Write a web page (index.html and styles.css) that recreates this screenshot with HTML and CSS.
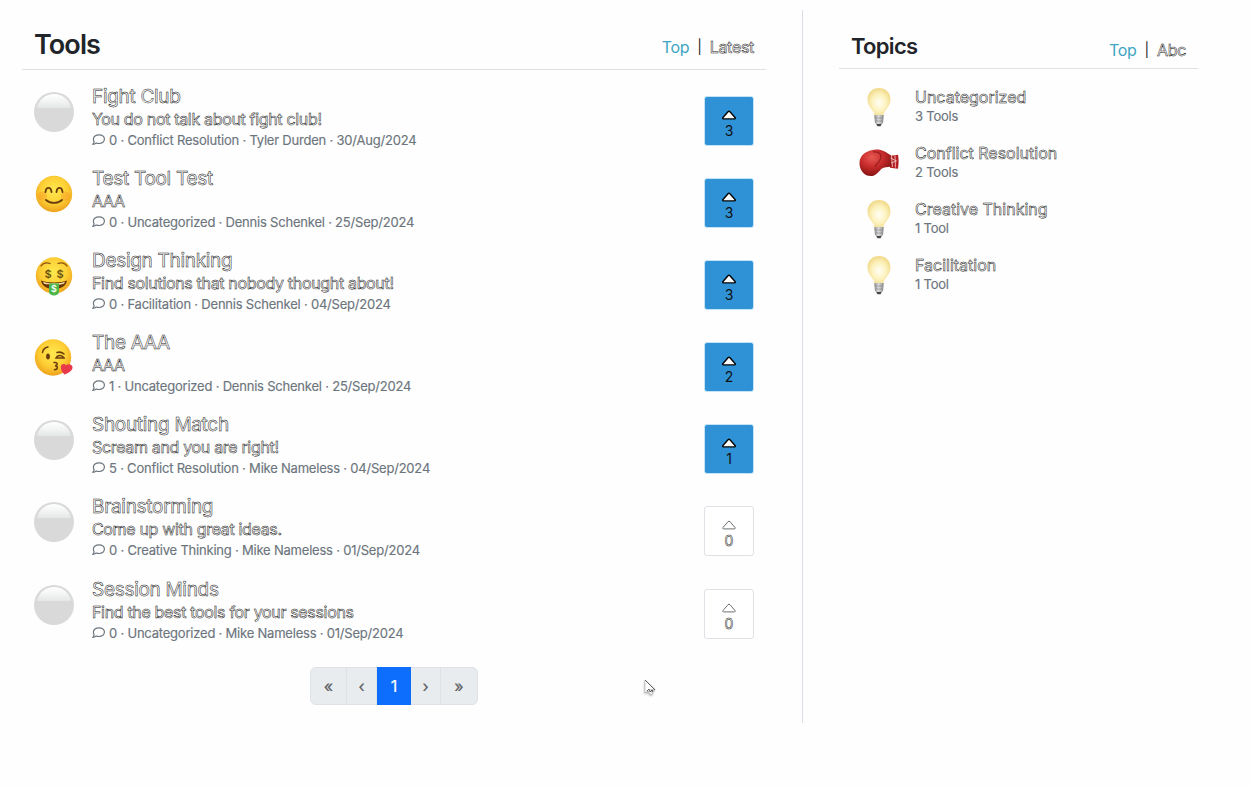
FILE: index.html
```
<!DOCTYPE html>
<html lang="en">
<head>
<meta charset="utf-8">
<title>Tools</title>
<link rel="stylesheet" href="styles.css">
</head>
<body>
<svg class="sprite" width="0" height="0" aria-hidden="true">
  <defs>
    <radialGradient id="face" cx=".5" cy=".4" r=".6"><stop offset="0" stop-color="#ffe94f"/><stop offset=".6" stop-color="#fdcf35"/><stop offset="1" stop-color="#eea21c"/></radialGradient>
    <radialGradient id="glow" cx=".5" cy=".55" r=".55"><stop offset="0" stop-color="#fffef4"/><stop offset=".55" stop-color="#fdf3c0"/><stop offset="1" stop-color="#f1d989"/></radialGradient>
    <linearGradient id="metal"><stop offset="0" stop-color="#888"/><stop offset=".45" stop-color="#ddd"/><stop offset="1" stop-color="#888"/></linearGradient>
    <radialGradient id="glove" cx=".4" cy=".3" r=".7"><stop offset="0" stop-color="#e85a54"/><stop offset=".5" stop-color="#c92c2c"/><stop offset="1" stop-color="#861313"/></radialGradient>
    <linearGradient id="gloss" x2="0" y2="1"><stop offset="0" stop-color="#fff"/><stop offset=".5" stop-color="#f3f4f4"/><stop offset="1" stop-color="#e4e7e7"/></linearGradient>
  </defs>
  <symbol id="blank" viewBox="0 0 40 40"><circle cx="20" cy="20" r="20" fill="#d9d9d9"/><path d="M3 16C5 7 12 2 20 2s15 5 17 14z" fill="url(#gloss)"/></symbol>
  <symbol id="smile" viewBox="0 0 40 40"><circle cx="20" cy="20" r="18.200" fill="url(#face)"/><circle cx="8.500" cy="22" r="4.500" fill="#f58c22" opacity=".35"/><circle cx="31.500" cy="22" r="4.500" fill="#f58c22" opacity=".35"/><path d="M11.500 18c.6-5.500 5.400-5.500 6 0M22.500 18c.6-5.500 5.400-5.500 6 0M12 26c4 3.800 12 3.800 16 0" fill="none" stroke="#6b3d0c" stroke-width="1.900" stroke-linecap="round"/></symbol>
  <symbol id="kiss" viewBox="0 0 40 40"><circle cx="19" cy="19.500" r="18.200" fill="url(#face)"/><ellipse cx="14" cy="18.500" rx="1.900" ry="3" fill="#6b3d0c"/><path d="M22 20c1.500-3.300 6-3.300 8 0zM8.500 14.500c.5-3 3-5 5.500-5.500M23 14.500c2.500-.8 5-.2 7 1.500M20 24.500c4-.5 4.200 2.700 1 3.200 3.200.2 3.200 3.500-.5 4" fill="none" stroke="#6b3d0c" stroke-width="1.500" stroke-linecap="round"/><path d="M30.500 36.500c-2.500-2.300-4-5-3.500-8 .6-3 4-3 5-1 1.500-2.200 6-1.700 6.500 1.500.4 3.500-4 6-8 7.500z" fill="#e8394a"/></symbol>
  <symbol id="bulb" viewBox="0 0 40 40"><path d="M15.500 28c-.5-5-7-8-7-15.500C8.500 5.500 13.500 1 20 1s11.500 4.500 11.500 11.500C31.500 20 25 23 24.500 28z" fill="url(#glow)"/><path d="M15.300 28h9.400l-.6 7.500-2.100 3h-4l-2.100-3z" fill="url(#metal)"/><path d="M15.500 31h9M16 34h8" stroke="#888" stroke-width=".6"/><path d="M17.500 37h5l-1 2.200h-3z" fill="#444"/></symbol>
  <symbol id="boxing" viewBox="0 0 40 40"><path d="M30 13l9-1.200c.8 4 .8 8 0 14l-8-1z" fill="#b51f22"/><path d="M.5 21C0 12 8 7 17 6.500c6-.2 10 2.500 15 6v11c-4 .8-7 .5-9 2-2.500 2-5.500 6.500-9.500 7.500C6 34 1 28 .5 21z" fill="url(#glove)"/><path d="M14 9c8-1 9 4 7 8-1.500 4-4 3-5 7" fill="none" stroke="#811515" stroke-width="1.200" opacity=".7"/><path d="M32.500 12.500l1 11.500M36 12.500l.5 12M31.500 15l6 3M32 20l5.500-2" stroke="#f0cccc" stroke-width=".8"/></symbol>
  <symbol id="comment" viewBox="0 0 13 12"><path d="M7 .8c3.200 0 5.400 1.900 5.400 4.300S10.200 9.500 7 9.500c-1 0-1.900-.2-2.700-.5-1 .8-2.200 1.300-3.600 1.300.8-.8 1.300-1.700 1.500-2.400C1.600 7.200 1.400 6.200 1.400 5.100 1.400 2.700 3.800.8 7 .8z" fill="none" stroke="#6c757d" stroke-width="1.200" stroke-linejoin="round"/></symbol>
  <symbol id="caret" viewBox="0 0 14 9"><path d="M1.300 8.400h11.400q1-.5.3-1.400L8 1.200q-1-1-2 0L1 7q-.7.900.3 1.400z"/></symbol>
</svg>
<div class="page">
  <main class="tools">
    <header class="head">
      <h1>Tools</h1>
      <nav class="sort"><a class="on">Top</a><span class="bar">|</span><a class="thin">Latest</a></nav>
    </header>
    <ul class="tool-list">
      <li class="tool"><svg class="emoji"><use href="#blank"/></svg><div class="info"><h2>Fight Club</h2><p class="thin">You do not talk about fight club!</p><small><svg class="comment"><use href="#comment"/></svg>0 · Conflict Resolution · Tyler Durden · 30/Aug/2024</small></div><button class="vote voted"><svg><use href="#caret"/></svg>3</button></li>
      <li class="tool"><svg class="emoji"><use href="#smile"/></svg><div class="info"><h2>Test Tool Test</h2><p class="thin">AAA</p><small><svg class="comment"><use href="#comment"/></svg>0 · Uncategorized · Dennis Schenkel · 25/Sep/2024</small></div><button class="vote voted"><svg><use href="#caret"/></svg>3</button></li>
      <li class="tool"><svg class="emoji" viewBox="0 0 40 40"><circle cx="20" cy="19.500" r="18.200" fill="url(#face)"/><path d="M7 10c1.500-3 6-4 9-2.500M24 7.500c3-1.500 7.500-.5 9 2.500" fill="none" stroke="#8a5110" stroke-width="1.300" stroke-linecap="round"/><path d="M7 24.500c5 2.500 21 2.500 26 0-.5 5-6 8.500-13 8.500S7.500 29.500 7 24.500z" fill="#6b3606"/><path d="M9 25.700c5 2 17 2 22 0l-1 2c-5 1.600-15 1.600-20 0z" fill="#f5dca4"/><path d="M15 27.500h10V36c0 4.500-10 4.500-10 0z" fill="#4cb748"/><g class="dollars"><text x="14" y="21.500" font-size="11">$</text><text x="26" y="21.500" font-size="11">$</text><text class="tongue" x="20" y="36" font-size="9">$</text></g></svg><div class="info"><h2>Design Thinking</h2><p class="thin">Find solutions that nobody thought about!</p><small><svg class="comment"><use href="#comment"/></svg>0 · Facilitation · Dennis Schenkel · 04/Sep/2024</small></div><button class="vote voted"><svg><use href="#caret"/></svg>3</button></li>
      <li class="tool"><svg class="emoji"><use href="#kiss"/></svg><div class="info"><h2>The AAA</h2><p class="thin">AAA</p><small><svg class="comment"><use href="#comment"/></svg>1 · Uncategorized · Dennis Schenkel · 25/Sep/2024</small></div><button class="vote voted"><svg><use href="#caret"/></svg>2</button></li>
      <li class="tool"><svg class="emoji"><use href="#blank"/></svg><div class="info"><h2>Shouting Match</h2><p class="thin">Scream and you are right!</p><small><svg class="comment"><use href="#comment"/></svg>5 · Conflict Resolution · Mike Nameless · 04/Sep/2024</small></div><button class="vote voted low"><svg><use href="#caret"/></svg>1</button></li>
      <li class="tool"><svg class="emoji"><use href="#blank"/></svg><div class="info"><h2>Brainstorming</h2><p class="thin">Come up with great ideas.</p><small><svg class="comment"><use href="#comment"/></svg>0 · Creative Thinking · Mike Nameless · 01/Sep/2024</small></div><button class="vote"><svg><use href="#caret"/></svg><span class="thin">0</span></button></li>
      <li class="tool"><svg class="emoji"><use href="#blank"/></svg><div class="info"><h2>Session Minds</h2><p class="thin">Find the best tools for your sessions</p><small><svg class="comment"><use href="#comment"/></svg>0 · Uncategorized · Mike Nameless · 01/Sep/2024</small></div><button class="vote"><svg><use href="#caret"/></svg><span class="thin">0</span></button></li>
    </ul>
    <nav class="pages"><a class="wide">«</a><a>‹</a><a class="current">1</a><a>›</a><a class="wide">»</a></nav>
  </main>
  <aside class="topics">
    <header class="head">
      <h1>Topics</h1>
      <nav class="sort"><a class="on">Top</a><span class="bar">|</span><a class="thin">Abc</a></nav>
    </header>
    <ul class="topic-list">
      <li class="topic"><svg class="emoji"><use href="#bulb"/></svg><div><p class="thin">Uncategorized</p><small>3 Tools</small></div></li>
      <li class="topic"><svg class="emoji"><use href="#boxing"/></svg><div><p class="thin">Conflict Resolution</p><small>2 Tools</small></div></li>
      <li class="topic"><svg class="emoji"><use href="#bulb"/></svg><div><p class="thin">Creative Thinking</p><small>1 Tool</small></div></li>
      <li class="topic"><svg class="emoji"><use href="#bulb"/></svg><div><p class="thin">Facilitation</p><small>1 Tool</small></div></li>
    </ul>
  </aside>
</div>
<svg class="cursor" viewBox="0 0 14 19"><path class="edge" d="M2 2v13l3-2.500 2 4 2.500-1-2-4H12z"/><path class="tip" d="M2 2l10 10M4 13l2-2 1 3 2-2 1 2"/></svg>
</body>
</html>
```
FILE: styles.css
```
* { box-sizing: border-box; margin: 0; padding: 0; }
html { height: 100%; overflow: hidden; }
body { height: 788px; background: #fefefe; color: #212529; font: 16px/24px Inter, sans-serif; }
.sprite { position: absolute; }
.page { display: flex; padding: 10px 54px 0 22px; }
.tools { width: 781px; height: 713px; padding-right: 36px; border-right: 1px solid #dcdce8; }
.topics { flex: 1; padding-left: 36px; }
.head { display: flex; justify-content: space-between; align-items: center; height: 60px; padding: 10px 12px 0; border-bottom: 1px solid #dee2e6; }
.head h1 { font-size: 27px; line-height: 34px; font-weight: 600; letter-spacing: -.9px; }
.sort { display: flex; gap: 8px; padding-top: 5px; font-size: 16px; letter-spacing: -.3px; }
.bar { font-size: 14px; }
.on { color: #3ea5c4; }
.thin, .info h2 { color: #fff; -webkit-text-stroke: .5px #111; }
.tool-list, .topic-list { list-style: none; }
.tool-list { padding-top: 14px; }
.tool { display: grid; grid-template-columns: 40px 1fr 50px; column-gap: 18px; height: 82.1px; padding: 0 12px; align-items: start; }
.emoji { width: 40px; height: 40px; margin-top: 8px; }
.dollars { font-family: Inter, sans-serif; font-weight: 600; text-anchor: middle; fill: #6d5510; }
.tongue { fill: #fff; }
.info { padding-top: 1px; }
.info h2 { font-size: 19px; line-height: 24px; font-weight: 400; letter-spacing: -.3px; }
.info p { line-height: 21px; letter-spacing: -.33px; }
small { display: block; font-size: 13px; line-height: 20px; letter-spacing: -.21px; color: #6c757d; -webkit-text-stroke: .15px #6c757d; white-space: nowrap; }
.comment { width: 13px; height: 12px; margin-right: 4px; vertical-align: -1px; }
.vote { display: flex; flex-direction: column; align-items: center; height: 50px; margin-top: 12px; padding-top: 13px; border: 1px solid #dee2e6; border-radius: 3px; background: #fff; color: #111; font: 14px/22px Inter, sans-serif; }
.vote svg { width: 14px; height: 10px; fill: #fff; stroke: #333; stroke-width: .7; }
.voted { background: #2f92d6; border-color: #c4e4f5; }
.voted svg { stroke: #000; stroke-width: 1.4; }
.pages { display: flex; width: 168px; height: 38px; margin: 8px auto 0 288px; background: #e9ecef; border: 1px solid #dee2e6; border-radius: 6px; color: #5c6064; -webkit-text-stroke: .2px; }
.pages a { display: flex; align-items: center; justify-content: center; width: 30px; border-right: 1px solid #dee2e6; }
.pages .wide { width: 36px; }
.pages .wide:last-child { border: 0; }
.pages .current { width: 34px; margin: -1px 0; background: #0d6efd; color: #fff; border: 0; }
.topics .head { height: 59px; padding-top: 14px; }
.topics h1 { font-size: 22px; letter-spacing: -.7px; }
.topics .sort { padding-top: 7px; }
.topic-list { padding-top: 9px; }
.topic { display: flex; gap: 16px; height: 56px; padding-left: 20px; }
.topic .emoji { margin-top: 9px; }
.topic > div { padding-top: 9px; }
.topic p { line-height: 20px; letter-spacing: 0; }
.topic small { line-height: 19px; }
.cursor { position: absolute; left: 643px; top: 678px; width: 14px; height: 19px; fill: #fff; filter: drop-shadow(0 1px 1px #999); }
.edge { stroke: #bbb; stroke-width: .7; }
.tip { fill: none; stroke: #444; stroke-width: .8; }
```
